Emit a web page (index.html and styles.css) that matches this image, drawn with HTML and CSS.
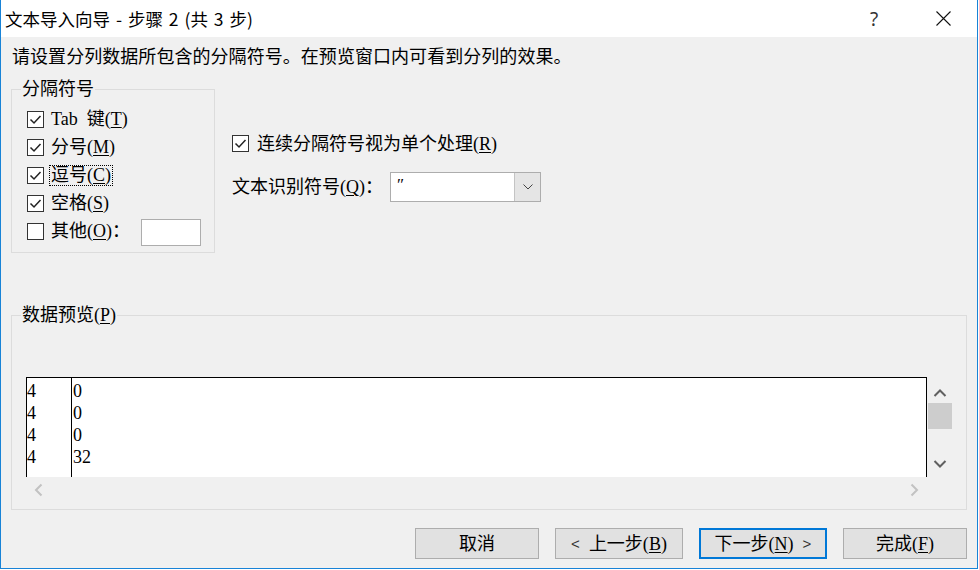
FILE: index.html
```html
<!DOCTYPE html>
<html lang="zh-CN">
<head>
<meta charset="utf-8">
<title>文本导入向导 - 步骤 2 (共 3 步)</title>
<link rel="stylesheet" href="styles.css">
</head>
<body>
<div class="window">
  <div class="titlebar">
    <span class="title">文本导入向导 - 步骤 2 (共 3 步)</span>
    <span class="help">?</span>
    <svg class="close" width="15" height="15" viewBox="0 0 15 15"><path d="M0.5 0.5L14.5 14.5M14.5 0.5L0.5 14.5" stroke="#111" stroke-width="1.1" fill="none"/></svg>
  </div>
  <div class="content">
    <p class="intro">请设置分列数据所包含的分隔符号。在预览窗口内可看到分列的效果。</p>
    <div class="upper">
      <fieldset class="group delims">
        <legend>分隔符号</legend>
        <div class="gbody">
          <div class="row">
            <span class="cb"><svg width="15" height="15" viewBox="0 0 15 15"><path d="M2.5 7.5L6 11L12.5 4" stroke="#222" stroke-width="1.5" fill="none"/></svg></span>
            <span class="lbl">Tab&nbsp; 键(<u>T</u>)</span>
          </div>
          <div class="row">
            <span class="cb"><svg width="15" height="15" viewBox="0 0 15 15"><path d="M2.5 7.5L6 11L12.5 4" stroke="#222" stroke-width="1.5" fill="none"/></svg></span>
            <span class="lbl">分号(<u>M</u>)</span>
          </div>
          <div class="row">
            <span class="cb"><svg width="15" height="15" viewBox="0 0 15 15"><path d="M2.5 7.5L6 11L12.5 4" stroke="#222" stroke-width="1.5" fill="none"/></svg></span>
            <span class="lbl focus">逗号(<u>C</u>)</span>
          </div>
          <div class="row">
            <span class="cb"><svg width="15" height="15" viewBox="0 0 15 15"><path d="M2.5 7.5L6 11L12.5 4" stroke="#222" stroke-width="1.5" fill="none"/></svg></span>
            <span class="lbl">空格(<u>S</u>)</span>
          </div>
          <div class="row">
            <span class="cb"></span>
            <span class="lbl other-lbl">其他(<u>O</u>)：</span>
            <span class="textbox"></span>
          </div>
        </div>
      </fieldset>
      <div class="options">
        <div class="row">
          <span class="cb"><svg width="15" height="15" viewBox="0 0 15 15"><path d="M2.5 7.5L6 11L12.5 4" stroke="#222" stroke-width="1.5" fill="none"/></svg></span>
          <span class="lbl">连续分隔符号视为单个处理(<u>R</u>)</span>
        </div>
        <div class="qualifier">
          <span class="q-lbl">文本识别符号(<u>Q</u>)：</span>
          <div class="combo">
            <span class="value">″</span>
            <span class="drop"><svg width="10" height="6" viewBox="0 0 10 6"><path d="M0.5 0.5L5 5L9.5 0.5" stroke="#444" stroke-width="1" fill="none"/></svg></span>
          </div>
        </div>
      </div>
    </div>
    <fieldset class="group preview">
      <legend>数据预览(<u>P</u>)</legend>
      <div class="gbody">
        <div class="pv">
          <div class="pv-main">
            <div class="grid">
              <div class="col c1">
                <div class="cell">4</div>
                <div class="cell">4</div>
                <div class="cell">4</div>
                <div class="cell">4</div>
              </div>
              <div class="col c2">
                <div class="cell">0</div>
                <div class="cell">0</div>
                <div class="cell">0</div>
                <div class="cell">32</div>
              </div>
            </div>
            <div class="vscroll">
              <span class="sb-btn"><svg width="26" height="26" viewBox="0 0 26 26"><path d="M7.5 19L13 13.5L18.5 19" stroke="#606060" stroke-width="2" fill="none"/></svg></span>
              <span class="thumb"></span>
              <span class="sb-fill"></span>
              <span class="sb-btn"><svg width="26" height="26" viewBox="0 0 26 26"><path d="M7.5 10L13 15.5L18.5 10" stroke="#606060" stroke-width="2" fill="none"/></svg></span>
            </div>
          </div>
          <div class="hscroll">
            <span class="sb-btn"><svg width="26" height="26" viewBox="0 0 26 26"><path d="M15.5 7.5L10 13L15.5 18.5" stroke="#c2c2c2" stroke-width="2" fill="none"/></svg></span>
            <span class="sb-btn"><svg width="26" height="26" viewBox="0 0 26 26"><path d="M10.5 7.5L16 13L10.5 18.5" stroke="#c2c2c2" stroke-width="2" fill="none"/></svg></span>
          </div>
        </div>
      </div>
    </fieldset>
    <div class="buttons">
      <button class="btn" type="button">取消</button>
      <button class="btn wide" type="button"><span class="chev">&lt;</span>  上一步(<u>B</u>)</button>
      <button class="btn wide default" type="button">下一步(<u>N</u>)  <span class="chev">&gt;</span></button>
      <button class="btn" type="button">完成(<u>F</u>)</button>
    </div>
  </div>
</div>
</body>
</html>
```

FILE: styles.css
```css
* { box-sizing: border-box; }
html, body { margin: 0; padding: 0; background: #ffffff; }
body {
  font-family: "Liberation Serif", "Noto Sans CJK SC", serif;
  font-size: 18px;
  color: #000;
}
u { text-decoration: underline; text-underline-offset: 2px; text-decoration-thickness: 1px; }

.window {
  width: 978px;
  border-left: 1px solid #1883d7;
  border-right: 1px solid #1883d7;
  border-bottom: 1px solid #1883d7;
  background: #f0f0f0;
}

.titlebar {
  height: 37px;
  background: #ffffff;
  display: flex;
  align-items: center;
  padding-left: 4px;
  font-family: "Noto Sans CJK SC", sans-serif;
  font-size: 17.5px;
}
.title { flex: 1; line-height: 20px; word-spacing: 2px; white-space: nowrap; }
.help {
  width: 10px;
  text-align: center;
  font-family: "Noto Sans", sans-serif;
  font-size: 19px;
  line-height: 20px;
  color: #333;
  margin-right: 57px;
}
.close { display: block; margin-right: 26px; }

.content { padding: 0 10px 9px 10px; }

.intro {
  margin: 8px 0 0 0;
  padding-left: 1px;
  line-height: 20px;
  font-family: "Noto Sans CJK SC", sans-serif;
  font-size: 18px;
  letter-spacing: 0.05px;
  white-space: nowrap;
}

.upper { display: flex; align-items: flex-start; margin-top: 14px; }

fieldset.group {
  margin: 0;
  padding: 0;
  border: 1px solid #dcdcdc;
  min-width: 0;
}
fieldset.group legend {
  padding: 0 1px;
  margin-left: 9px;
  line-height: 20px;
}
fieldset.delims { width: 204px; }
.delims .gbody { padding: 6px 0 7px 15px; }

.row { display: flex; align-items: center; height: 28px; }
.cb {
  width: 17px;
  height: 17px;
  border: 1px solid #333;
  background: #fff;
  align-self: flex-start;
  margin-top: 6px;
  flex: none;
}
.cb svg { display: block; }
.lbl {
  margin-left: 5px;
  padding: 0 1px;
  border: 1px dotted transparent;
  line-height: 19px;
  white-space: nowrap;
}
.lbl.focus { border-color: #000; }
.other-lbl { width: 92px; }
.textbox {
  width: 60px;
  height: 27px;
  background: #fff;
  border: 1px solid #adadad;
  align-self: flex-start;
  margin-top: 2px;
}

.options { margin-left: 17px; padding-top: 51px; }
.options .cb { margin-top: 5px; }
.options .lbl { margin-left: 6px; }

.qualifier { display: flex; align-items: center; height: 30px; margin-top: 14px; }
.q-lbl { width: 158px; line-height: 20px; white-space: nowrap; }
.combo {
  width: 151px;
  height: 30px;
  border: 1px solid #adadad;
  background: #fff;
  display: flex;
}
.combo .value {
  flex: 1;
  padding-left: 6px;
  line-height: 24px;
  font-size: 17px;
}
.drop {
  width: 26px;
  background: #e5e5e5;
  border-left: 1px solid #c4c4c4;
  display: flex;
  align-items: center;
  justify-content: center;
}
.drop svg { display: block; }

fieldset.preview { margin-top: 51px; }
fieldset.preview legend { line-height: 22px; }
.preview .gbody { padding: 51px 13px 6px 14px; }

.pv { width: 927px; }
.pv-main { display: flex; height: 100px; }
.grid {
  width: 901px;
  border: 1px solid #000;
  border-bottom: 0;
  background: #fff;
  display: flex;
}
.col { padding-top: 2px; }
.c1 { width: 45px; border-right: 1px solid #000; }
.c2 { padding-left: 1px; }
.cell { height: 22px; line-height: 22px; }

.vscroll { width: 26px; display: flex; flex-direction: column; align-items: center; }
.sb-btn { width: 26px; height: 26px; flex: none; }
.sb-btn svg { display: block; }
.thumb { width: 24px; height: 26px; background: #cdcdcd; flex: none; }
.sb-fill { flex: 1; }

.hscroll { width: 901px; height: 26px; display: flex; justify-content: space-between; }

.buttons { display: flex; justify-content: flex-end; gap: 16px; margin-top: 18px; }
.btn {
  width: 124px;
  height: 31px;
  margin: 0;
  padding: 0;
  border: 1px solid #adadad;
  background: #e1e1e1;
  font-family: "Liberation Serif", "Noto Sans CJK SC", serif;
  font-size: 18px;
  line-height: 20px;
  color: #000;
  display: flex;
  align-items: center;
  justify-content: center;
  white-space: pre;
}
.btn.wide { width: 128px; }
.btn.default { border: 2px solid #0078d7; }
.chev { font-family: "Liberation Sans", sans-serif; font-size: 15px; color: #333; }
```
